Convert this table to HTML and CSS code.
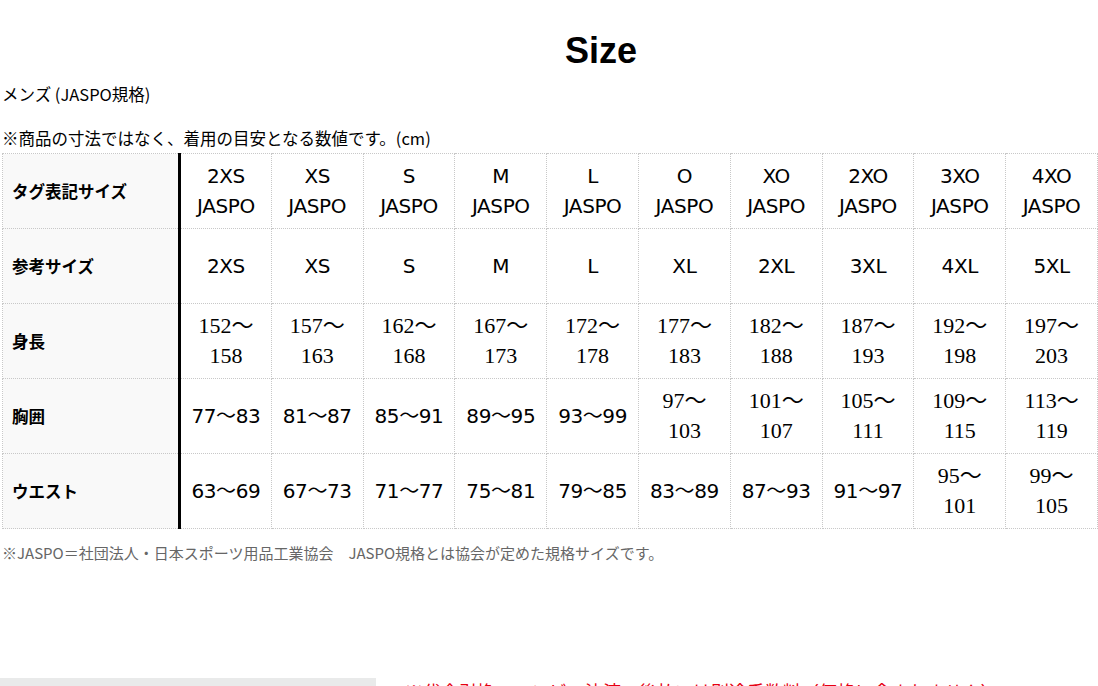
FILE: index.html
```html
<!DOCTYPE html>
<html lang="ja">
<head>
	<meta charset="UTF-8">
	<title>Size</title>
	<link rel="stylesheet" href="styles.css">
</head>
<body>
<div class="content">
	<h2 class="title">Size</h2>
	<p class="lead">メンズ (JASPO規格)</p>
	<p class="note">※商品の寸法ではなく、着用の目安となる数値です。(cm)</p>
	<table class="size">
		<colgroup>
			<col class="c-head">
			<col span="10">
		</colgroup>
		<tr>
			<th>タグ表記サイズ</th>
			<td>2XS<br>JASPO</td><td>XS<br>JASPO</td><td>S<br>JASPO</td><td>M<br>JASPO</td><td>L<br>JASPO</td>
			<td>O<br>JASPO</td><td>XO<br>JASPO</td><td>2XO<br>JASPO</td><td>3XO<br>JASPO</td><td>4XO<br>JASPO</td>
		</tr>
		<tr>
			<th>参考サイズ</th>
			<td>2XS</td><td>XS</td><td>S</td><td>M</td><td>L</td>
			<td>XL</td><td>2XL</td><td>3XL</td><td>4XL</td><td>5XL</td>
		</tr>
		<tr class="serif">
			<th>身長</th>
			<td>152～<br>158</td><td>157～<br>163</td><td>162～<br>168</td><td>167～<br>173</td><td>172～<br>178</td>
			<td>177～<br>183</td><td>182～<br>188</td><td>187～<br>193</td><td>192～<br>198</td><td>197～<br>203</td>
		</tr>
		<tr>
			<th>胸囲</th>
			<td>77～83</td><td>81～87</td><td>85～91</td><td>89～95</td><td>93～99</td>
			<td class="w">97～<br>103</td><td class="w">101～<br>107</td><td class="w">105～<br>111</td><td class="w">109～<br>115</td><td class="w">113～<br>119</td>
		</tr>
		<tr>
			<th>ウエスト</th>
			<td>63～69</td><td>67～73</td><td>71～77</td><td>75～81</td><td>79～85</td>
			<td>83～89</td><td>87～93</td><td>91～97</td><td class="w">95～<br>101</td><td class="w">99～<br>105</td>
		</tr>
	</table>
	<p class="foot">※JASPO＝社団法人・日本スポーツ用品工業協会　JASPO規格とは協会が定めた規格サイズです。</p>
	<div class="more">
		<div class="thumb"></div>
		<p class="price">※代金引換・コンビニ決済・後払いは別途手数料（価格に含まれません）</p>
	</div>
</div>
</body>
</html>
```

FILE: styles.css
```css
*{margin:0;padding:0;}
html,body{overflow:hidden;}
body{
	font-family:"DejaVu Sans","Noto Sans CJK JP",sans-serif;
	color:#000;
	background:#fff;
}
.content{padding-left:2px;width:1100px;}
.title{
	font-family:"Liberation Sans",Arial,sans-serif;
	font-size:36px;font-weight:bold;line-height:44px;
	text-align:center;
	margin-top:29px;padding-left:98px;
}
.lead{
	font-family:"Noto Sans CJK JP",sans-serif;
	font-size:16.5px;line-height:24px;margin-top:9px;
}
.note{
	font-family:"Noto Sans CJK JP",sans-serif;
	font-size:16.5px;line-height:24px;margin-top:20px;
}
.size{
	margin-top:3px;
	width:1096px;
	table-layout:fixed;
	border-collapse:collapse;
}
.size .c-head{width:177px;}
.size th,.size td{
	border:1px dotted #c8c8c8;
	height:74px;
}
.size th{
	background:#f9f9f9;
	text-align:left;
	padding-left:9px;
	font-family:"Noto Sans CJK JP",sans-serif;
	font-size:16.5px;font-weight:bold;
	border-right:3px solid #000;
}
.size td{
	text-align:center;
	font-size:20px;
	line-height:30px;
	font-family:"DejaVu Sans","Noto Sans CJK JP",sans-serif;
	letter-spacing:-0.4px;
}
.size .serif td,.size td.w{
	font-family:"Liberation Serif","Noto Sans CJK JP",serif;
	font-size:22px;letter-spacing:0;
}
.foot{
	font-family:"Noto Sans CJK JP",sans-serif;
	font-size:15px;line-height:20px;
	color:#666;
	margin-top:14px;
}
.more{
	display:flex;
	margin-top:115px;
	margin-left:-2px;
}
.thumb{width:376px;height:300px;background:#e9eaea;}
.price{
	font-family:"Noto Sans CJK JP",sans-serif;
	color:#e60012;font-size:18px;line-height:24px;
	margin-left:29px;margin-top:1px;
}
```
